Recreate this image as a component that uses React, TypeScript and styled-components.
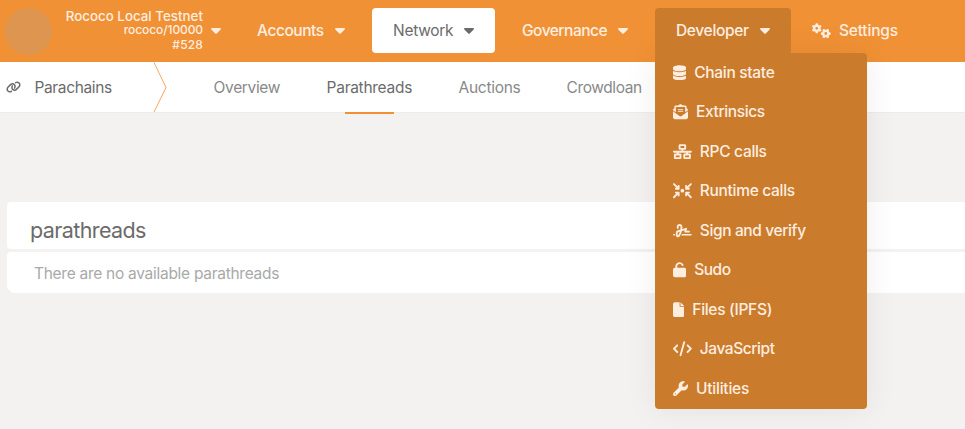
import React from 'react';
import styled, { createGlobalStyle } from 'styled-components';
import type { IconType } from 'react-icons';
import {
  FaArrowsToCircle, FaCode, FaDatabase, FaEnvelopeOpenText, FaFile, FaGears,
  FaLink, FaNetworkWired, FaSignature, FaUnlock, FaWrench,
} from 'react-icons/fa6';

const Global = createGlobalStyle`
  *, *::before, *::after { box-sizing: border-box; }
  body {
    margin: 0;
    overflow: hidden;
    background: #f3f2f1;
    font-family: Inter, 'Liberation Sans', sans-serif;
    font-size: 15.5px;
    color: #6b6b6b;
    -webkit-font-smoothing: antialiased;
  }
`;

const Page = styled.div`
  height: 429px;
  overflow: hidden;
`;

const TopBar = styled.header`
  display: flex;
  align-items: flex-start;
  height: 62px;
  padding: 8px 0 0 5px;
  background: #f19135;
  color: #fdeee0;
`;

const ChainLogo = styled.div`
  flex: none;
  width: 47px;
  height: 47px;
  border-radius: 50%;
  background: #dd9550;
`;

const ChainInfo = styled.div`
  display: flex;
  align-items: center;
  width: 184px;
  height: 45px;
  gap: 8px;
`;

const ChainText = styled.div`
  display: flex;
  flex-direction: column;
  align-items: flex-end;
  width: 151px;
  font-weight: 500;
  line-height: 14.5px;
  white-space: nowrap;
`;

const ChainLine = styled.div<{ $size: number; $track?: number }>`
  font-size: ${p => p.$size}px;
  letter-spacing: ${p => p.$track ?? 0}px;
`;

const CaretIcon = styled.svg`
  flex: none;
  width: 10px;
  height: 6px;
  margin-top: 1px;
  fill: currentColor;
`;

const Caret = () => (
  <CaretIcon viewBox="0 0 10 6">
    <path d="M.9 0h8.2c.8 0 1.2.9.6 1.5L5.7 5.6a1 1 0 0 1-1.4 0L.3 1.5C-.3.9.1 0 .9 0Z" />
  </CaretIcon>
);

const Nav = styled.nav`
  display: flex;
  gap: 6px;
`;

const NavSlot = styled.div`
  position: relative;
`;

const NavItem = styled.div<{ $state?: 'active' | 'open'; $pad?: number; $gap?: number }>`
  display: flex;
  align-items: center;
  gap: ${p => p.$gap ?? 11}px;
  height: 45px;
  padding: 0 ${p => p.$pad ?? 21}px;
  border-radius: ${p => (p.$state === 'open' ? '4px 4px 0 0' : '4px')};
  background: ${p => (p.$state === 'active' ? '#fff' : p.$state === 'open' ? '#cb7b2c' : 'transparent')};
  color: ${p => (p.$state === 'active' ? '#6b6b6b' : 'inherit')};
`;

const Label = styled.span<{ $width?: number; $track?: number; $weight?: number }>`
  flex: none;
  width: ${p => (p.$width ? `${p.$width}px` : 'auto')};
  letter-spacing: ${p => p.$track ?? 0}px;
  font-weight: ${p => p.$weight ?? 500};
  white-space: nowrap;
`;

const Glyph = styled.span<{ $width: number; $height?: number }>`
  display: flex;
  flex: none;
  svg {
    display: block;
    width: ${p => p.$width}px;
    height: ${p => p.$height ?? 15.4}px;
  }
`;

const Menu = styled.div`
  position: absolute;
  z-index: 2;
  top: 45px;
  left: 0;
  width: 212px;
  height: 356px;
  border-radius: 0 4px 4px 4px;
  background: #cb7b2c;
  box-shadow: 0 0 34px rgba(0, 0, 0, 0.07);
`;

const MenuTab = styled(NavItem)`
  position: relative;
  z-index: 3;
`;

const MenuItem = styled.div`
  display: flex;
  align-items: center;
  gap: 8px;
  height: 39.5px;
  padding-left: 18px;
  &:first-child {
    margin-top: -0.3px;
  }
`;

const SubBar = styled.div`
  display: flex;
  height: 51px;
  background: #fff;
  border-bottom: 1px solid #eeeceb;
`;

const Section = styled.div`
  display: flex;
  align-items: center;
  gap: 13.5px;
  width: 153px;
  padding-left: 6px;
`;

const Divider = styled.svg`
  flex: none;
  width: 14px;
  height: 50px;
  fill: none;
  stroke: #f5a75e;
`;

const Tabs = styled.div`
  display: flex;
  gap: 46px;
  padding-left: 46.6px;
`;

const Tab = styled.div<{ $active?: boolean }>`
  position: relative;
  display: flex;
  align-items: center;
  color: ${p => (p.$active ? '#6b6b6b' : '#898989')};
  &::after {
    content: '';
    display: ${p => (p.$active ? 'block' : 'none')};
    position: absolute;
    left: 18.4px;
    bottom: -2px;
    width: 49px;
    height: 2px;
    background: #f19135;
  }
`;

const Content = styled.main`
  padding: 89px 0 0 7px;
`;

const TableHead = styled.div`
  display: flex;
  align-items: center;
  height: 47px;
  padding: 8px 0 0 23px;
  margin-bottom: 3px;
  border-radius: 4px 0 0 4px;
  background: #fff;
  font-size: 21.5px;
`;

const TableEmpty = styled.div`
  display: flex;
  align-items: center;
  height: 41px;
  padding: 2px 0 0 27px;
  border-radius: 4px 0 0 8px;
  background: #fff;
  color: #a9a9a9;
`;

interface Entry {
  icon: IconType;
  width: number;
  text: string;
  track: number;
}

const developer: Entry[] = [
  { icon: FaDatabase, width: 13.2, text: 'Chain state', track: -0.3 },
  { icon: FaEnvelopeOpenText, width: 15, text: 'Extrinsics', track: -0.38 },
  { icon: FaNetworkWired, width: 18.8, text: 'RPC calls', track: -0.3 },
  { icon: FaArrowsToCircle, width: 18.8, text: 'Runtime calls', track: -0.3 },
  { icon: FaSignature, width: 18.8, text: 'Sign and verify', track: -0.37 },
  { icon: FaUnlock, width: 13.2, text: 'Sudo', track: -0.45 },
  { icon: FaFile, width: 11.3, text: 'Files (IPFS)', track: -0.3 },
  { icon: FaCode, width: 18.8, text: 'JavaScript', track: -0.42 },
  { icon: FaWrench, width: 15, text: 'Utilities', track: -0.22 },
];

export default function App() {
  return (
    <Page>
      <Global />
      <TopBar>
        <ChainLogo />
        <ChainInfo>
          <ChainText>
            <ChainLine $size={13.3} $track={0.03}>Rococo Local Testnet</ChainLine>
            <ChainLine $size={12} $track={-0.1}>rococo/10000</ChainLine>
            <ChainLine $size={12} $track={0.15}>#528</ChainLine>
          </ChainText>
          <Caret />
        </ChainInfo>
        <Nav>
          <NavItem><Label $width={67} $track={-0.45}>Accounts</Label><Caret /></NavItem>
          <NavItem $state="active"><Label $width={60} $track={-0.28} $weight={400}>Network</Label><Caret /></NavItem>
          <NavItem><Label $width={85} $track={-0.5}>Governance</Label><Caret /></NavItem>
          <NavSlot>
            <MenuTab $state="open"><Label $width={73} $track={-0.33}>Developer</Label><Caret /></MenuTab>
            <Menu>
              {developer.map(({ icon: Icon, width, text, track }) => (
                <MenuItem key={text}>
                  <Glyph $width={width}><Icon /></Glyph>
                  <Label $track={track}>{text}</Label>
                </MenuItem>
              ))}
            </Menu>
          </NavSlot>
          <NavItem $pad={15} $gap={8}>
            <Glyph $width={19}><FaGears /></Glyph>
            <Label $track={-0.2}>Settings</Label>
          </NavItem>
        </Nav>
      </TopBar>
      <SubBar>
        <Section>
          <Glyph $width={15} $height={12}><FaLink /></Glyph>
          <Label $track={-0.37} $weight={400}>Parachains</Label>
        </Section>
        <Divider viewBox="0 0 14 50"><path d="M1 .5 13 25.5 1 50" /></Divider>
        <Tabs>
          <Tab><Label $width={67} $weight={400} $track={-0.35}>Overview</Label></Tab>
          <Tab $active><Label $width={86} $weight={400} $track={-0.28}>Parathreads</Label></Tab>
          <Tab><Label $width={62} $weight={400} $track={-0.3}>Auctions</Label></Tab>
          <Tab><Label $width={76} $weight={400} $track={-0.41}>Crowdloan</Label></Tab>
        </Tabs>
      </SubBar>
      <Content>
        <TableHead><Label $weight={400} $track={-0.6}>parathreads</Label></TableHead>
        <TableEmpty><Label $weight={400} $track={-0.28}>There are no available parathreads</Label></TableEmpty>
      </Content>
    </Page>
  );
}
